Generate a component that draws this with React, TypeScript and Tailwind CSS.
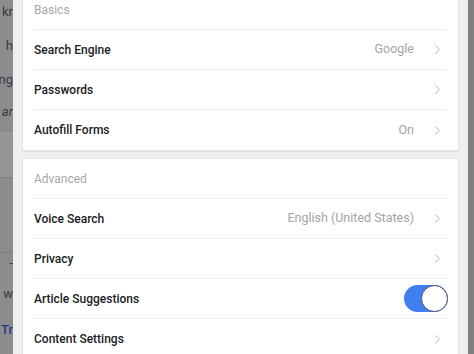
import { ChevronRight } from 'lucide-react';

type Row = { label: string; value?: string; toggle?: boolean };

const basics: Row[] = [
  { label: 'Search Engine', value: 'Google' },
  { label: 'Passwords' },
  { label: 'Autofill Forms', value: 'On' },
];

const advanced: Row[] = [
  { label: 'Voice Search', value: 'English (United States)' },
  { label: 'Privacy' },
  { label: 'Article Suggestions', toggle: true },
  { label: 'Content Settings' },
];

function Toggle() {
  return (
    <div className="flex h-[27px] w-[44px] items-center justify-end rounded-full bg-[#3f7ff0]">
      <div className="h-[27px] w-[27px] rounded-full border-[1.5px] border-[#4b5068] bg-white" />
    </div>
  );
}

function SettingRow({ row, last }: { row: Row; last?: boolean }) {
  return (
    <div className={`ml-[11px] mr-3 flex h-10 items-center ${last ? '' : 'border-b border-[#ededed]'}`}>
      <span className="flex-1 text-[12px] font-medium text-[#202124]">{row.label}</span>
      {row.value && <span className="mr-[16px] text-[12.5px] text-[#a3a3a3]">{row.value}</span>}
      {row.toggle ? (
        <div className="-mr-[2px]">
          <Toggle />
        </div>
      ) : (
        <ChevronRight size={15} strokeWidth={1.4} className="mr-[1px] text-[#aaaaaa]" />
      )}
    </div>
  );
}

function Card({ title, rows, className }: { title: string; rows: Row[]; className?: string }) {
  return (
    <div className={`border border-[#e2e2e2] bg-white shadow-[0_1px_1px_rgba(0,0,0,0.06)] ${className ?? ''}`}>
      <div className="ml-[11px] mr-3 flex h-10 items-center border-b border-[#ededed]">
        <span className="text-[12px] text-[#a8a8a8]">{title}</span>
      </div>
      {rows.map((r, i) => (
        <SettingRow key={r.label} row={r} last={i === rows.length - 1} />
      ))}
    </div>
  );
}

export default function App() {
  return (
    <div
      className="flex h-[354px] w-[474px] overflow-hidden bg-[#8c8c8f]"
      style={{ fontFamily: 'Roboto, "Noto Sans", sans-serif' }}
    >
      <div className="flex w-[13px] shrink-0 flex-col items-end overflow-hidden text-[13px] text-[#3a3a3c] whitespace-nowrap">
        <div className="mt-[2px] h-[34px]">kr</div>
        <div className="h-[34px]">h</div>
        <div className="h-[32px]">ng</div>
        <div className="h-[30px] italic">ar</div>
        <div className="h-[45px] w-full border-t border-[#9a9a9d] bg-[#959598]" />
        <div className="h-[75px] w-full border-t border-[#808083]" />
        <div className="h-[32px] w-full border-t border-[#808083] text-right">-</div>
        <div className="h-[36px]">w</div>
        <div className="font-medium text-[#2b3a8a]">Tr</div>
      </div>
      <div className="flex w-[455px] shrink-0 flex-col bg-[#efeff0] pl-[9px] pr-[9px]">
        <Card title="Basics" rows={basics} className="-mt-[11px] pt-0" />
        <Card title="Advanced" rows={advanced} className="mt-[7px]" />
      </div>
      <div className="flex-1 bg-[#7f7f82]" />
    </div>
  );
}
